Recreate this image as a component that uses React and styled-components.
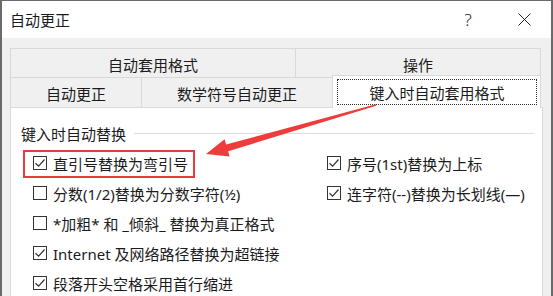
import React from "react";
import styled, { createGlobalStyle } from "styled-components";

const Global = createGlobalStyle`
  html, body {
    margin: 0;
    padding: 0;
    background: #ffffff;
    overflow: hidden;
  }
  body {
    font-family: "Noto Sans", "Noto Sans CJK SC", sans-serif;
    color: #1b1b1b;
  }
`;

const Window = styled.div`
  position: relative;
  width: 553px;
  height: 296px;
  box-sizing: border-box;
  border-top: 1px solid #6a6a6a;
  border-left: 2px solid #6a6a6a;
  border-right: 2px solid #6a6a6a;
  background: #f0f0f0;
  overflow: hidden;
  display: flex;
  flex-direction: column;
`;

const TitleBar = styled.div`
  height: 37px;
  flex: none;
  background: #ffffff;
  display: flex;
  align-items: center;
  padding-left: 8px;
  font-size: 15px;
  .title {
    flex: 1;
    margin-top: -1px;
  }
`;

const CaptionBtn = styled.div`
  width: 46px;
  height: 37px;
  display: flex;
  align-items: center;
  justify-content: center;
  font-size: 17px;
  font-weight: 300;
  color: #222;
  margin-right: ${(p) => p.$mr || 0}px;
`;

const Body = styled.div`
  flex: 1;
  padding: 10px 8px 0 8px;
  display: flex;
  flex-direction: column;
`;

const TabRow = styled.div`
  display: flex;
  height: ${(p) => p.$h}px;
  flex: none;
`;

const Tab = styled.div`
  position: relative;
  box-sizing: border-box;
  width: ${(p) => p.$w}px;
  height: ${(p) => (p.$active ? "calc(100% + 3px)" : "100%")};
  margin-top: ${(p) => (p.$active ? -2 : 0)}px;
  border-top: 1px solid #d9d9d9;
  border-right: 1px solid #d9d9d9;
  border-left: ${(p) => (p.$first || p.$active ? "1px solid #d9d9d9" : "none")};
  background: ${(p) => (p.$active ? "#ffffff" : "#f0f0f0")};
  z-index: ${(p) => (p.$active ? 2 : 0)};
  display: flex;
  align-items: center;
  justify-content: center;
  font-size: 15px;
  padding-top: 2px;
  margin-left: ${(p) => (p.$active ? -1 : 0)}px;
`;

const Focus = styled.div`
  position: absolute;
  left: 4px;
  right: 3px;
  top: 3px;
  bottom: 3px;
  border: 1px dotted #333;
  display: flex;
  align-items: center;
  justify-content: center;
`;

const Panel = styled.div`
  flex: 1;
  background: #ffffff;
  border: 1px solid #d9d9d9;
  border-bottom: none;
  padding: 14px 8px 0 10px;
`;

const GroupHead = styled.div`
  display: flex;
  align-items: center;
  gap: 8px;
  font-size: 15px;
  height: 22px;
  &::after {
    content: "";
    flex: 1;
    height: 1px;
    background: #dcdcdc;
    margin-top: 1px;
  }
`;

const Columns = styled.div`
  display: flex;
  margin-top: 4px;
  padding-left: 12px;
`;

const Column = styled.div`
  display: flex;
  flex-direction: column;
  width: ${(p) => p.$w}px;
`;

const Item = styled.div`
  position: relative;
  display: flex;
  align-items: center;
  gap: 6px;
  width: fit-content;
  height: 30px;
  font-size: 15px;
  white-space: nowrap;
  ${(p) =>
    p.$marked &&
    `
    &::after {
      content: "";
      position: absolute;
      left: -10px;
      right: -7px;
      top: 2px;
      bottom: 0px;
      border: 2px solid #e53a3e;
    }
  `}
`;

const Box = styled.span`
  width: 14px;
  height: 14px;
  box-sizing: border-box;
  border: 1px solid #333;
  background: #fff;
  display: flex;
  align-items: center;
  justify-content: center;
  flex: none;
`;

const Overlay = styled.svg`
  position: absolute;
  left: -2px;
  top: -1px;
  pointer-events: none;
  z-index: 5;
`;

function Check({ checked, children, marked }) {
  return (
    <Item $marked={marked}>
      <Box>
        {checked && (
          <svg width="12" height="12" viewBox="0 0 12 12">
            <path d="M1.5 6.2 L4.6 9.2 L10.5 2.5" fill="none" stroke="#333" strokeWidth="1.2" />
          </svg>
        )}
      </Box>
      <span>{children}</span>
    </Item>
  );
}

export default function App() {
  return (
    <>
      <Global />
      <Window>
        <TitleBar>
          <span className="title">自动更正</span>
          <CaptionBtn $mr={10}>?</CaptionBtn>
          <CaptionBtn $mr={4}>
            <svg width="13" height="13" viewBox="0 0 13 13">
              <path d="M0.5 0.5 L12.5 12.5 M12.5 0.5 L0.5 12.5" stroke="#222" strokeWidth="1" />
            </svg>
          </CaptionBtn>
        </TitleBar>
        <Body>
          <TabRow $h={29}>
            <Tab $w={286} $first>自动套用格式</Tab>
            <Tab $w={245}>操作</Tab>
          </TabRow>
          <TabRow $h={30}>
            <Tab $w={132} $first>自动更正</Tab>
            <Tab $w={191}>数学符号自动更正</Tab>
            <Tab $w={209} $active>
              <Focus>键入时自动套用格式</Focus>
            </Tab>
          </TabRow>
          <Panel>
            <GroupHead>键入时自动替换</GroupHead>
            <Columns>
              <Column $w={294}>
                <Check checked marked>直引号替换为弯引号</Check>
                <Check>分数(1/2)替换为分数字符(½)</Check>
                <Check>*加粗* 和 _倾斜_ 替换为真正格式</Check>
                <Check checked>Internet 及网络路径替换为超链接</Check>
                <Check checked>段落开头空格采用首行缩进</Check>
              </Column>
              <Column $w={200}>
                <Check checked>序号(1st)替换为上标</Check>
                <Check checked>连字符(--)替换为长划线(—)</Check>
              </Column>
            </Columns>
          </Panel>
        </Body>
        <Overlay width="553" height="296" viewBox="0 0 553 296">
          <polygon
            points="206,154 224.6,139.3 226.1,144.5 375.8,104.3 376.2,105.7 228.1,151.3 229.6,156.5"
            fill="#ee3b3b"
          />
        </Overlay>
      </Window>
    </>
  );
}
